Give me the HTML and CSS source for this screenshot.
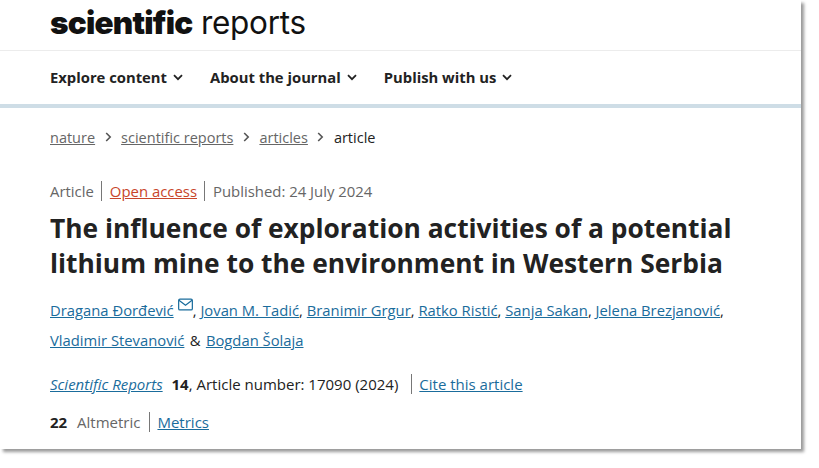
FILE: index.html
```html
<!DOCTYPE html>
<html lang="en">
  <head>
    <meta charset="UTF-8" />
    <title>The influence of exploration activities - Scientific Reports</title>
    <link rel="stylesheet" href="styles.css">
  </head>
  <body>
    <div class="sheet">
      <header class="masthead">
        <a href="#" class="logo"><b>scientific</b> reports</a>
      </header>

      <nav class="navbar">
        <a href="#" class="navbar-item">Explore content
          <svg class="caret" viewBox="0 0 10 7"><path d="M1 1.2l4 4 4-4" /></svg></a>
        <a href="#" class="navbar-item">About the journal
          <svg class="caret" viewBox="0 0 10 7"><path d="M1 1.2l4 4 4-4" /></svg></a>
        <a href="#" class="navbar-item">Publish with us
          <svg class="caret" viewBox="0 0 10 7"><path d="M1 1.2l4 4 4-4" /></svg></a>
      </nav>

      <ol class="crumbs">
        <li><a href="#">nature</a></li>
        <li class="sep"><svg viewBox="0 0 7 10"><path d="M1.2 1l4 4-4 4" /></svg></li>
        <li><a href="#">scientific reports</a></li>
        <li class="sep"><svg viewBox="0 0 7 10"><path d="M1.2 1l4 4-4 4" /></svg></li>
        <li><a href="#">articles</a></li>
        <li class="sep"><svg viewBox="0 0 7 10"><path d="M1.2 1l4 4-4 4" /></svg></li>
        <li class="current">article</li>
      </ol>

      <article class="article">
        <ul class="meta">
          <li>Article</li>
          <li><a href="#" class="open">Open access</a></li>
          <li>Published: 24 July 2024</li>
        </ul>

        <h1>The influence of exploration activities of a potential lithium mine to the environment in Western Serbia</h1>

        <p class="authors">
          <a href="#">Dragana Đorđević</a><svg class="mail" viewBox="0 0 16 13"><rect x="0.7" y="0.7" width="14.6" height="11.6" rx="1.4" /><path d="M1 2l7 5.4L15 2" /></svg>, <a href="#">Jovan M. Tadić</a>, <a href="#">Branimir Grgur</a>, <a href="#">Ratko Ristić</a>, <a href="#">Sanja Sakan</a>, <a href="#">Jelena Brezjanović</a>,<br>
          <a href="#">Vladimir Stevanović</a> <span class="amp">&amp;</span> <a href="#">Bogdan Šolaja</a>
        </p>

        <div class="cite">
          <span><a href="#"><i>Scientific Reports</i></a> <b class="vol">14</b>, Article number: 17090 (2024)</span>
          <a href="#" class="cite-link">Cite this article</a>
        </div>

        <div class="metrics">
          <span><b>22</b> <span class="muted">Altmetric</span></span>
          <a href="#" class="cite-link">Metrics</a>
        </div>
      </article>
    </div>
  </body>
</html>
```

FILE: styles.css
```css
/* General styling */
html,
body {
  height: 468px;
}

body {
  font-family: "Open Sans", "Noto Sans", sans-serif;
  margin: 0;
  padding: 0;
  background-color: #fff;
  color: #222;
  font-size: 14.8px;
  overflow: hidden;
}

a {
  color: #1a6c9c;
}

.sheet {
  width: 801px;
  height: 449px;
  background: #fff;
  box-shadow: 3px 3px 3px rgba(0, 0, 0, 0.4);
  overflow: hidden;
}

.masthead {
  height: 50px;
  padding-left: 50px;
  border-bottom: 1px solid #ececec;
}

.logo {
  font-family: "Inter", "Liberation Sans", sans-serif;
  font-size: 31.5px;
  line-height: 46px;
  color: #111;
  text-decoration: none;
  letter-spacing: -0.3px;
}

.logo b {
  font-weight: 900;
  letter-spacing: -0.8px;
}

.navbar {
  height: 51px;
  padding: 0 0 2px 50px;
  display: flex;
  align-items: center;
  gap: 27px;
  border-bottom: 4px solid #cedde6;
}

.navbar-item {
  color: #222;
  font-weight: 700;
  font-size: 14.8px;
  text-decoration: none;
  display: flex;
  align-items: center;
  gap: 6px;
}

.caret {
  width: 10px;
  height: 7px;
  margin-top: 2px;
  fill: none;
  stroke: #222;
  stroke-width: 1.8;
}

.crumbs {
  list-style: none;
  margin: 0;
  padding: 17px 0 0 50px;
  display: flex;
  align-items: center;
  gap: 9.5px;
  height: 24px;
  color: #666;
  font-size: 14.5px;
}

.crumbs a {
  color: #666;
}

.crumbs .sep svg {
  display: block;
  width: 7px;
  height: 10px;
  fill: none;
  stroke: #555;
  stroke-width: 1.6;
}

.crumbs .current {
  color: #222;
}

.article {
  padding: 32px 50px 0;
}

.meta {
  list-style: none;
  margin: 0;
  padding: 0;
  display: flex;
  color: #666;
  line-height: 20px;
  font-size: 14.9px;
}

.meta li + li {
  margin-left: 7.5px;
  padding-left: 7.5px;
  border-left: 1px solid #777;
}

.meta .open {
  color: #c8452a;
}

h1 {
  margin: 10px 0 0;
  font-size: 26.35px;
  line-height: 35px;
  font-weight: 700;
  color: #222;
  width: 700px;
}

.authors {
  margin: 14px 0 0;
  line-height: 30px;
  font-size: 14.8px;
}

.amp {
  margin: 0 1.5px;
}

.mail {
  width: 15px;
  height: 13px;
  margin-left: 4px;
  vertical-align: 5px;
  fill: none;
  stroke: #1a6c9c;
  stroke-width: 1.3;
}

.cite,
.metrics {
  display: flex;
  align-items: center;
  line-height: 20px;
}

.cite {
  margin-top: 19px;
  font-size: 15px;
}

.metrics {
  margin-top: 18px;
  font-size: 15px;
}

.vol {
  margin-left: 5px;
}

.cite-link {
  margin-left: 9px;
  padding-left: 8px;
  position: relative;
}

.cite .cite-link {
  margin-left: 13px;
}

.cite-link::before {
  content: "";
  position: absolute;
  left: 0;
  top: 0;
  bottom: 0;
  border-left: 1px solid #777;
}

.muted {
  color: #666;
  margin-left: 6px;
}
```
